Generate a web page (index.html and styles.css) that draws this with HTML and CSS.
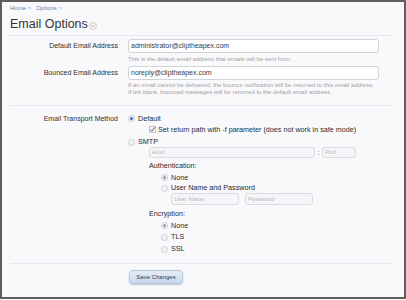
FILE: index.html
```html
<!DOCTYPE html>
<html>
<head>
<meta charset="utf-8">
<link rel="stylesheet" href="styles.css">
</head>
<body>
<div class="frame">
  <div class="crumbs"><a>Home</a> &gt;&nbsp;&nbsp; <a>Options</a> &gt;</div>
  <h1 class="title">Email Options<span class="menu-ico"><svg width="8" height="8" viewBox="0 0 8 8"><circle cx="4" cy="4" r="3.4" fill="#fff" stroke="#bbb" stroke-width="0.8"/><path d="M2.4 3.3 L4 4.9 L5.6 3.3" fill="none" stroke="#999" stroke-width="0.9"/></svg></span></h1>
  <div class="sep"></div>

  <div class="row r1">
    <div class="lbl">Default Email Address</div>
    <div class="ctrl">
      <div class="input">administrator@cliptheapex.com</div>
      <p class="hint h1">This is the default email address that emails will be sent from.</p>
    </div>
  </div>

  <div class="row r2">
    <div class="lbl">Bounced Email Address</div>
    <div class="ctrl">
      <div class="input">noreply@cliptheapex.com</div>
      <p class="hint h2">If an email cannot be delivered, the bounce notification will be returned to this email address.<br>If left blank, bounced messages will be returned to the default email address.</p>
    </div>
  </div>

  <div class="sep sep2"></div>

  <div class="row r3">
    <div class="lbl lbl3">Email Transport Method</div>
    <div class="ctrl">
      <div class="opt o-default"><span class="radio on"></span>Default</div>
      <div class="opt o-check lvl2"><span class="check"><svg width="7" height="7" viewBox="0 0 7 7"><path d="M1.3 3.6 L2.8 5.2 L5.8 1.4" fill="none" stroke="#555" stroke-width="1"/></svg></span>Set return path with -f parameter (does not work in safe mode)</div>
      <div class="opt o-smtp"><span class="radio"></span>SMTP</div>
      <div class="hostline lvl2"><div class="input dis host">Host</div><span class="colon">:</span><div class="input dis port">Port</div></div>
      <div class="sub lvl2 s-auth">Authentication:</div>
      <div class="opt lvl3 o-anone"><span class="radio on dim"></span>None</div>
      <div class="opt lvl3 o-unp"><span class="radio"></span>User Name and Password</div>
      <div class="userline lvl4"><div class="input dis user">User Name</div><div class="input dis pass">Password</div></div>
      <div class="sub lvl2 s-enc">Encryption:</div>
      <div class="opt lvl3 o-enone"><span class="radio on dim"></span>None</div>
      <div class="opt lvl3 o-tls"><span class="radio"></span>TLS</div>
      <div class="opt lvl3 o-ssl"><span class="radio"></span>SSL</div>
    </div>
  </div>

  <div class="sep sep3"></div>

  <div class="actions">
    <button class="btn">Save Changes</button>
  </div>
</div>
</body>
</html>
```

FILE: styles.css
```css
html, body {
  margin: 0;
  padding: 0;
  background: #fff;
}
.frame {
  box-sizing: border-box;
  width: 406px;
  height: 299px;
  border: 2px solid #5e5e5e;
  background: #f9f9fc;
  padding: 2px 11px 0 8px;
  font-family: "Liberation Sans", Arial, sans-serif;
  font-size: 7px;
  color: #333;
  overflow: hidden;
}
.crumbs {
  font-size: 6px;
  line-height: 8px;
  height: 8px;
  color: #8a9fbf;
}
.crumbs a {
  color: #5f82b5;
}
.title {
  margin: 2px 0 0 0;
  height: 20px;
  line-height: 18px;
  font-size: 12.5px;
  font-weight: normal;
  color: #333;
  display: flex;
  align-items: center;
}
.menu-ico {
  display: inline-flex;
  margin-left: 1px;
  margin-top: 3px;
}
.sep {
  height: 1px;
  background: #e6e8ef;
  margin-top: 1px;
}
.sep2 { margin-top: 9px; }
.sep3 { margin-top: 8px; }

.row {
  display: flex;
  gap: 10px;
}
.r1 { margin-top: 3px; }
.r2 { margin-top: 3px; }
.r3 { margin-top: 7px; }
.lbl {
  width: 108px;
  flex: none;
  text-align: right;
  line-height: 14px;
  font-size: 7px;
  color: #2e2e2e;
}
.lbl3 { line-height: 11px; }
.ctrl {
  flex: 1;
}
.input {
  box-sizing: border-box;
  width: 251px;
  height: 14px;
  line-height: 12px;
  border: 1px solid #cfd3da;
  border-radius: 3px;
  background: #fff;
  padding: 0 2px;
  font-size: 7px;
  color: #3a3a3a;
}
.hint {
  margin: 0;
  font-size: 6px;
  color: #a2a2a2;
}
.hint.h1 { margin-top: 2px; line-height: 8px; }
.hint.h2 { margin-top: 2px; line-height: 7px; }

.opt {
  display: flex;
  align-items: center;
  line-height: 11px;
  height: 11px;
  font-size: 7.2px;
  color: #2a2a2a;
}
.lvl2 { margin-left: 21px; }
.lvl3 { margin-left: 33px; }
.lvl4 { margin-left: 43px; }
.o-check { height: 11px; }
.o-smtp { margin-top: 2px; height: 10px; line-height: 10px; }
.radio {
  box-sizing: border-box;
  width: 7px;
  height: 7px;
  border-radius: 50%;
  border: 1px solid #c8ccd4;
  background: #f4f5f8;
  margin-right: 3px;
  flex: none;
  position: relative;
}
.radio.on::after {
  content: "";
  position: absolute;
  left: 1px;
  top: 1px;
  width: 3px;
  height: 3px;
  border-radius: 50%;
  background: #4f6d92;
}
.radio.on.dim::after { background: #8f98a6; }
.check {
  box-sizing: border-box;
  width: 7px;
  height: 7px;
  border: 1px solid #bfc4cc;
  background: #f5f6f9;
  margin-right: 2px;
  flex: none;
  display: inline-flex;
  align-items: center;
  justify-content: center;
}
.check svg { margin: -1px; }

.hostline, .userline {
  display: flex;
  align-items: center;
}
.dis {
  background: #f5f5f7;
  color: #b8b8bf;
  font-style: italic;
  font-size: 6px;
  border-color: #d8dbe0;
}
.host { width: 166px; height: 11px; line-height: 9px; }
.colon { width: 7px; text-align: center; color: #444; }
.port { width: 34px; height: 11px; line-height: 9px; }
.userline { gap: 6px; margin-top: 0; }
.user, .pass { width: 68px; height: 12px; line-height: 10px; }

.sub {
  line-height: 10px;
  height: 10px;
  font-size: 7.2px;
  color: #2a2a2a;
}
.s-auth { margin-top: 3px; }
.o-anone { margin-top: 1px; }
.o-unp { height: 10px; line-height: 10px; }
.s-enc { margin-top: 4px; }
.o-enone { margin-top: 1px; }
.o-tls, .o-ssl { height: 12px; line-height: 12px; }

.actions {
  padding-left: 119px;
  margin-top: 6px;
}
.btn {
  box-sizing: border-box;
  width: 54px;
  height: 14px;
  padding: 0;
  border: 1px solid #b3c7de;
  border-radius: 4px;
  background: linear-gradient(#e6eef7, #c6d7ea);
  box-shadow: 0 1px 2px rgba(90,110,140,0.35);
  font-family: "Liberation Sans", Arial, sans-serif;
  font-size: 6px;
  color: #2c3e55;
}
```
